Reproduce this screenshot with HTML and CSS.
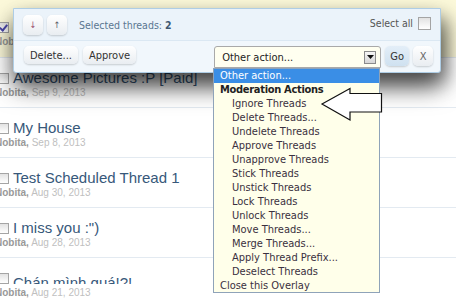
FILE: index.html
```html
<!DOCTYPE html>
<html lang="en">
<head>
  <meta charset="UTF-8" />
  <title>Inline moderation</title>
  <link rel="stylesheet" href="styles.css">
</head>
<body>

<div class="thread-list">
  <div class="thread selected">
    <div class="title-line"><span class="check checked"></span><a class="title">Spoiler Test</a></div>
    <div class="meta"><span class="author">Nobita,</span> <span class="date">Sep 10, 2013</span></div>
  </div>
  <div class="thread">
    <div class="title-line"><span class="check"></span><a class="title">Awesome Pictures :P [Paid]</a></div>
    <div class="meta"><span class="author">Nobita,</span> <span class="date">Sep 9, 2013</span></div>
  </div>
  <div class="thread">
    <div class="title-line"><span class="check"></span><a class="title">My House</a></div>
    <div class="meta"><span class="author">Nobita,</span> <span class="date">Sep 8, 2013</span></div>
  </div>
  <div class="thread">
    <div class="title-line"><span class="check"></span><a class="title">Test Scheduled Thread 1</a></div>
    <div class="meta"><span class="author">Nobita,</span> <span class="date">Aug 30, 2013</span></div>
  </div>
  <div class="thread">
    <div class="title-line"><span class="check"></span><a class="title">I miss you :")</a></div>
    <div class="meta"><span class="author">Nobita,</span> <span class="date">Aug 28, 2013</span></div>
  </div>
  <div class="thread">
    <div class="title-line"><span class="check"></span><a class="title clipped">Chán mình quá!?!</a></div>
    <div class="meta"><span class="author">Nobita,</span> <span class="date">Aug 21, 2013</span></div>
  </div>
</div>

<div class="inline-mod">
  <div class="mod-top">
    <button class="btn nav down">&darr;</button>
    <button class="btn nav up">&uarr;</button>
    <span class="selected-count">Selected threads: <b>2</b></span>
    <label class="select-all">Select all <span class="check"></span></label>
  </div>
  <div class="mod-bottom">
    <button class="btn">Delete...</button>
    <button class="btn">Approve</button>
    <div class="action-select">
      <span>Other action...</span>
      <span class="drop-btn">
        <svg width="7" height="4" viewBox="0 0 7 4"><path d="M0 0h7L3.5 4z" fill="#111"/></svg>
      </span>
    </div>
    <button class="btn go">Go</button>
    <button class="btn close">X</button>
  </div>
</div>

<ul class="action-menu">
  <li class="option active">Other action...</li>
  <li class="group">Moderation Actions</li>
  <li class="option sub">Ignore Threads</li>
  <li class="option sub">Delete Threads...</li>
  <li class="option sub">Undelete Threads</li>
  <li class="option sub">Approve Threads</li>
  <li class="option sub">Unapprove Threads</li>
  <li class="option sub">Stick Threads</li>
  <li class="option sub">Unstick Threads</li>
  <li class="option sub">Lock Threads</li>
  <li class="option sub">Unlock Threads</li>
  <li class="option sub">Move Threads...</li>
  <li class="option sub">Merge Threads...</li>
  <li class="option sub">Apply Thread Prefix...</li>
  <li class="option sub">Deselect Threads</li>
  <li class="option">Close this Overlay</li>
</ul>

<svg class="pointer" width="70" height="40" viewBox="318 84 70 40">
  <path d="M322 104 L350 88.5 V93.5 H381.5 V112 H350 V120 Z" fill="#fff" stroke="#111" stroke-width="1.2" stroke-linejoin="miter"/>
</svg>

</body>
</html>
```

FILE: styles.css
```css
body {
  margin: 0;
  width: 456px;
  height: 300px;
  overflow: hidden;
  position: relative;
  background: #ffffff;
  font-family: 'Liberation Sans', Arial, sans-serif;
}

/* thread list */

.thread-list {
  margin-left: -5px;
}

.thread {
  height: 50px;
  box-sizing: border-box;
  padding-top: 11px;
  border-bottom: 1px solid #e3eaf1;
}

.thread.selected {
  height: 58px;
  padding-top: 18px;
  background-color: #fcf9da;
}

.title-line {
  height: 18px;
  display: flex;
  align-items: center;
}

.title {
  font-size: 15px;
  line-height: 18px;
  color: #37587a;
  margin-left: 4px;
}

.title.clipped {
  height: 10px;
  overflow: hidden;
  display: block;
  margin-top: 1px;
}

.meta {
  font-size: 10px;
  line-height: 12px;
  color: #c0c0c0;
}

.author {
  color: #999999;
  font-weight: bold;
}

.check {
  display: inline-block;
  width: 9px;
  height: 9px;
  margin-left: 3px;
  border: 1px solid #a4a4a4;
  background: linear-gradient(#e2e2e2, #ffffff);
  position: relative;
}

.check.checked::after {
  content: "";
  position: absolute;
  left: 2px;
  top: 0;
  width: 3px;
  height: 6px;
  border: solid #4a46a8;
  border-width: 0 2px 2px 0;
  transform: rotate(40deg);
}

/* inline moderation overlay */

.inline-mod {
  position: absolute;
  left: 13px;
  top: 8px;
  width: 428px;
  height: 65px;
  box-sizing: border-box;
  border: 1px solid #aecde5;
  border-radius: 0 0 3px 3px;
  background: #f1f7fc;
  box-shadow: 0 14px 24px rgba(0, 0, 0, 0.6), 6px 10px 18px rgba(0, 0, 0, 0.35);
  font-family: 'DejaVu Sans Condensed', 'DejaVu Sans', sans-serif;
  font-size: 11px;
}

.mod-top {
  height: 32px;
  box-sizing: border-box;
  padding: 0 9px;
  display: flex;
  align-items: center;
  gap: 4px;
  background: #ebf3fa;
  border-bottom: 1px solid #dbe8f3;
}

.mod-bottom {
  display: flex;
  align-items: flex-start;
  padding: 5px 0 0 10px;
  gap: 5px;
}

.btn {
  font-family: inherit;
  font-size: 11px;
  color: #333333;
  height: 18px;
  padding: 0 6px;
  border: none;
  border-radius: 5px;
  background: linear-gradient(#ffffff, #e9edf1);
  box-shadow: 0 1px 2px rgba(0, 0, 0, 0.18);
}

.btn.nav {
  width: 20px;
  height: 20px;
  padding: 0;
  font-size: 9px;
}

.btn.down {
  color: #9a4d6e;
}

.btn.up {
  color: #5c5f6a;
}

.selected-count {
  margin-left: 8px;
  color: #5a7691;
  font-size: 10.5px;
}

.selected-count b {
  color: #3d5872;
}

.select-all {
  margin-left: auto;
  display: flex;
  align-items: center;
  gap: 2px;
  margin-top: -3px;
  color: #555555;
  font-size: 10.5px;
}

.select-all .check {
  width: 11px;
  height: 11px;
}

.action-select {
  width: 167px;
  height: 22px;
  box-sizing: border-box;
  margin-left: 73px;
  padding: 0 4px 0 7px;
  display: flex;
  align-items: center;
  justify-content: space-between;
  border: 1px solid #a9a9a9;
  border-radius: 3px 3px 0 0;
  background: #fffff0;
  color: #222222;
}

.drop-btn {
  width: 10px;
  height: 11px;
  border: 1px solid #8b8b8b;
  background: linear-gradient(#f6f6f6, #d6d6d6);
  display: flex;
  align-items: center;
  justify-content: center;
}

.btn.go {
  width: 24px;
  height: 20px;
  margin-left: -1px;
  padding: 0;
  background: linear-gradient(#e3eef8, #cfe1f0);
}

.btn.close {
  width: 20px;
  height: 20px;
  margin-left: -1px;
  padding: 0;
  color: #666666;
}

/* native-looking dropdown list */

.action-menu {
  position: absolute;
  left: 213px;
  top: 68px;
  width: 167px;
  height: 225px;
  box-sizing: border-box;
  margin: 0;
  padding: 0;
  list-style: none;
  border: 1px solid #8fa3b9;
  background: #ffffea;
  font-family: 'DejaVu Sans Condensed', 'DejaVu Sans', sans-serif;
  font-size: 11px;
  color: #3a3040;
}

.action-menu li {
  height: 14px;
  line-height: 14px;
  padding-left: 6px;
  white-space: nowrap;
}

.action-menu .active {
  background: #3a8ee6;
  color: #ffffff;
}

.action-menu .group {
  font-weight: bold;
  color: #222222;
  letter-spacing: -0.3px;
}

.action-menu .sub {
  padding-left: 18px;
}

.pointer {
  position: absolute;
  left: 318px;
  top: 84px;
}
```
